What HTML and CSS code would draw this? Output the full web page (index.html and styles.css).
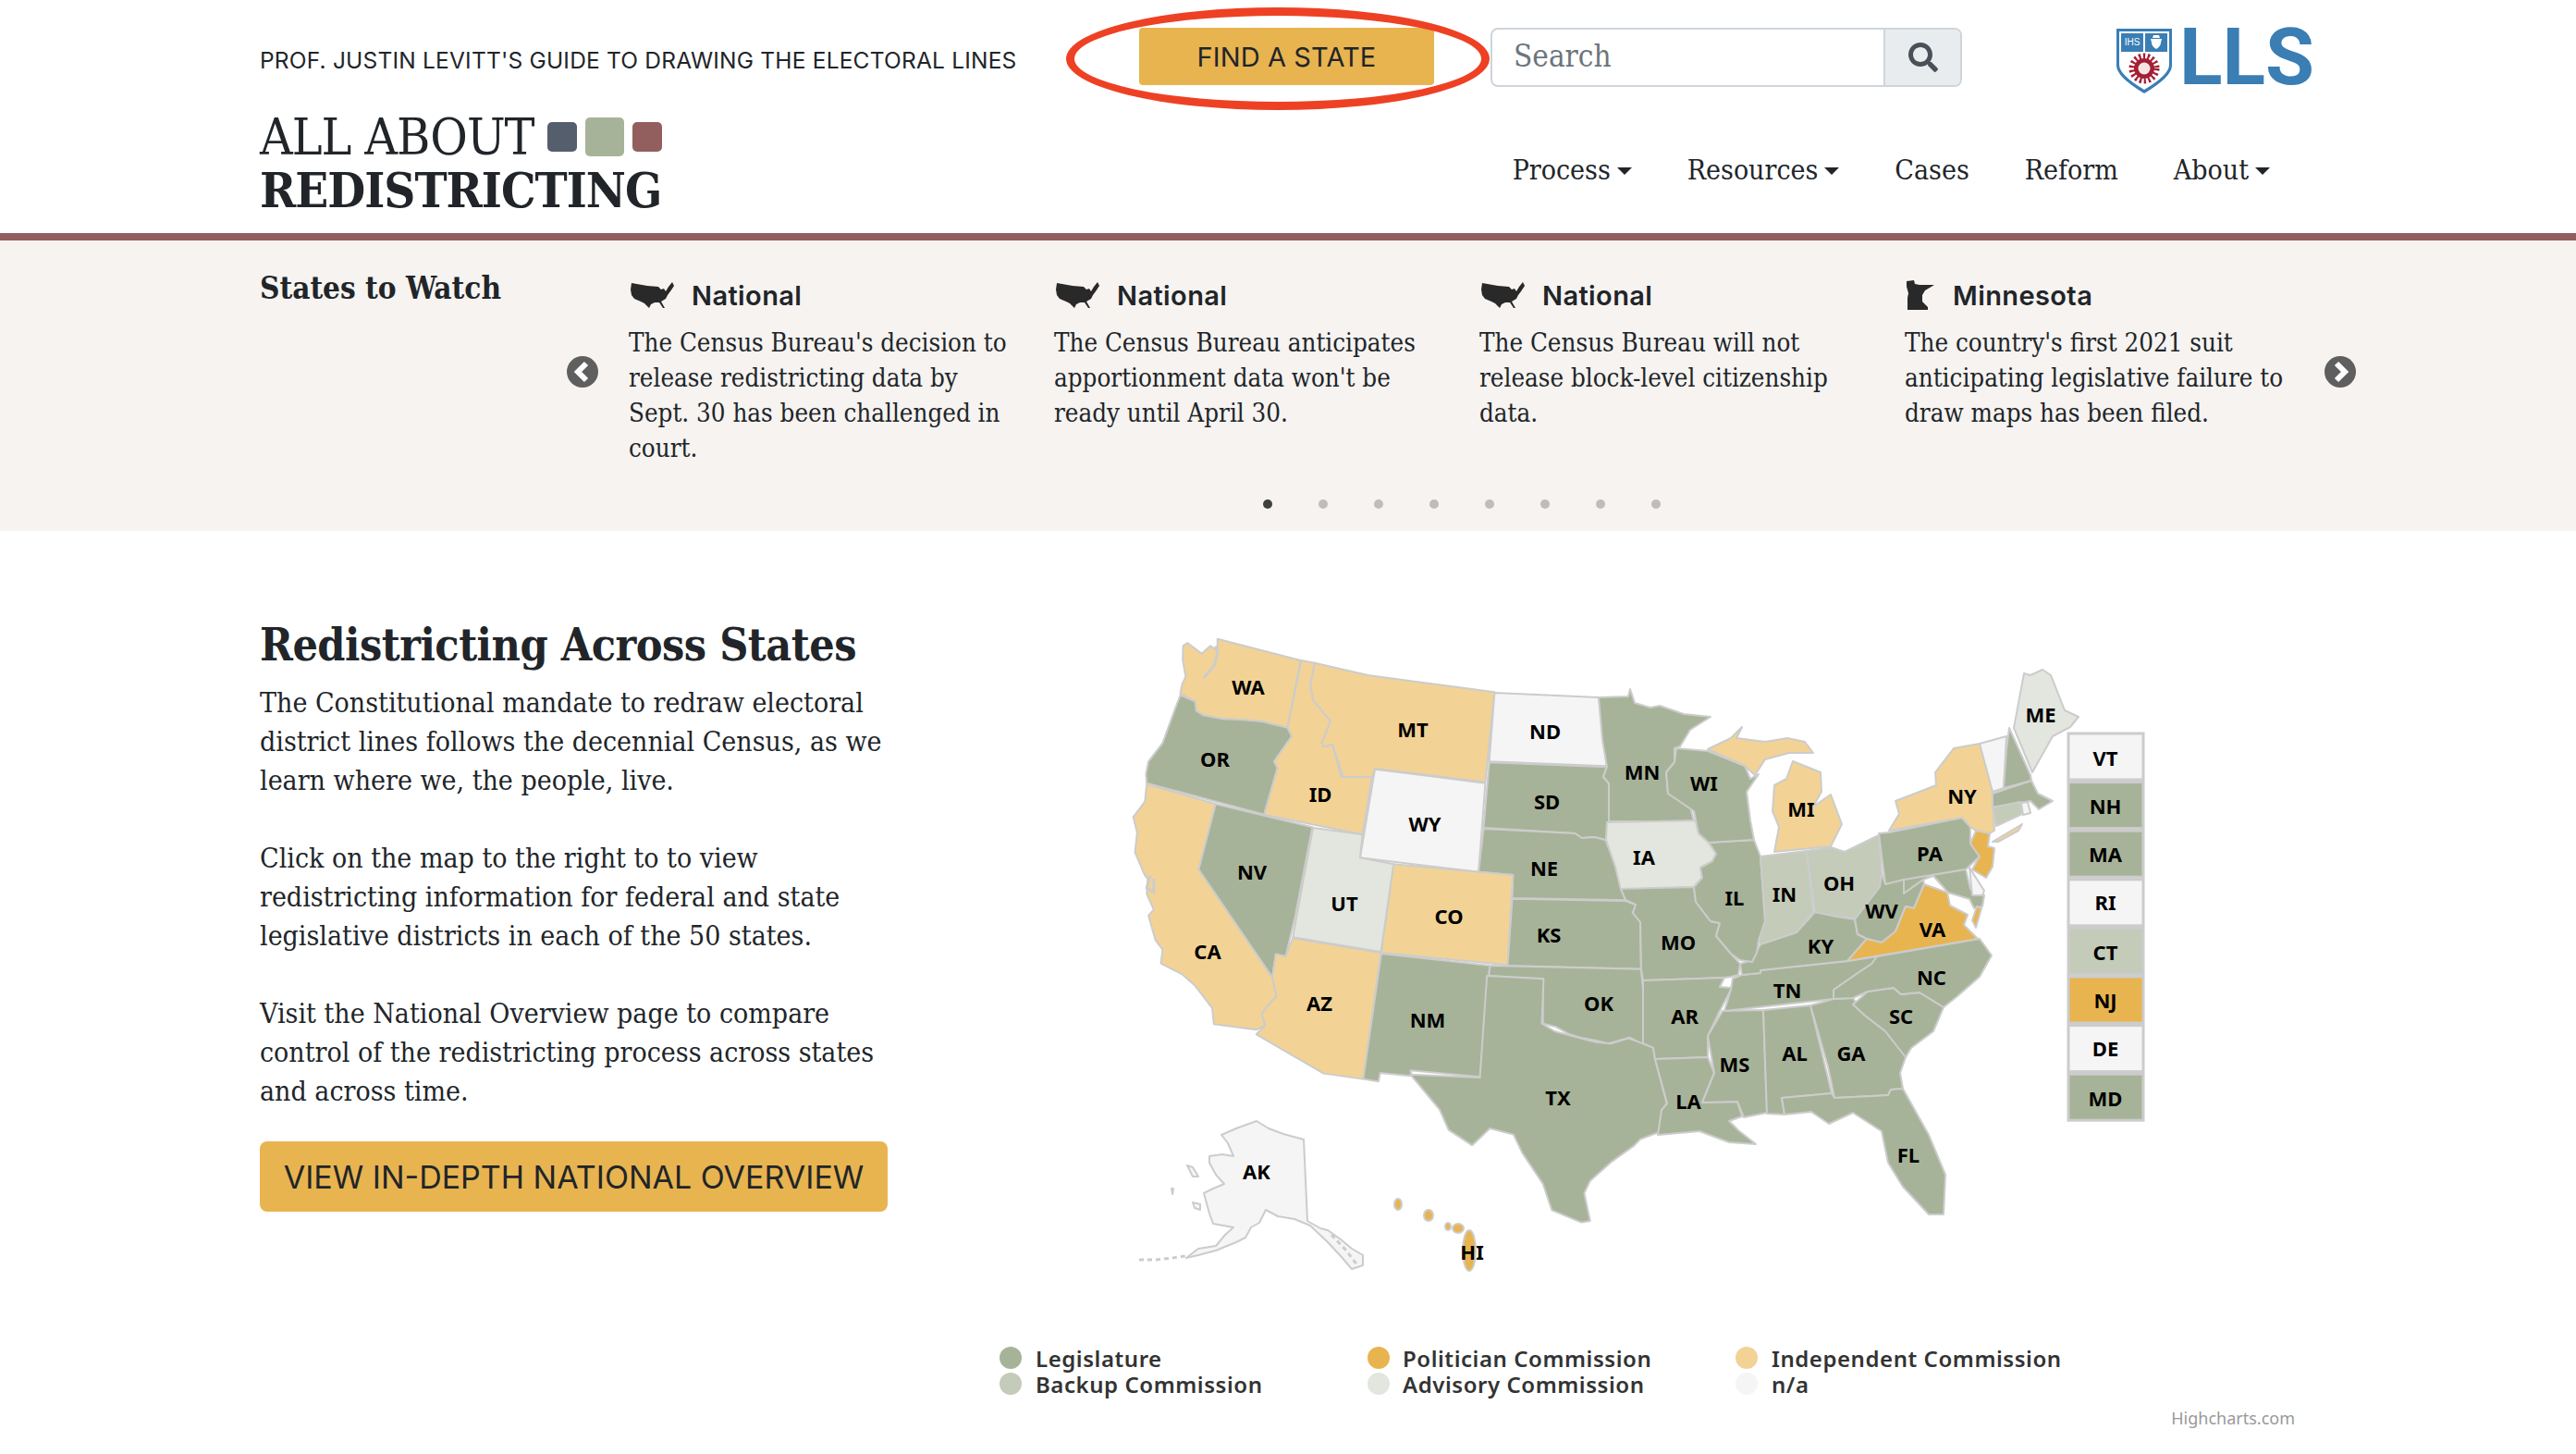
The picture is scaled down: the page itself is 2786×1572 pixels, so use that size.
FILE: index.html
```html
<!DOCTYPE html>
<html lang="en">
<head>
<meta charset="utf-8">
<title>All About Redistricting</title>
<link rel="stylesheet" href="styles.css">
</head>
<body>
<header class="site-header">
  <div class="top-row">
    <p class="tagline">PROF. JUSTIN LEVITT'S GUIDE TO DRAWING THE ELECTORAL LINES</p>
    <div class="find-wrap">
      <a class="find-btn">FIND A STATE</a>
      <span class="red-ring"></span>
    </div>
    <div class="search">
      <span class="search-input">Search</span>
      <span class="search-btn">
        <svg class="search-icon" viewBox="0 0 512 512"><path d="M505 442.7L405.3 343c-4.5-4.5-10.6-7-17-7H372c27.6-35.3 44-79.7 44-128C416 93.1 322.9 0 208 0S0 93.1 0 208s93.1 208 208 208c48.3 0 92.7-16.4 128-44v16.3c0 6.4 2.5 12.5 7 17l99.7 99.7c9.4 9.4 24.6 9.4 33.9 0l28.3-28.3c9.4-9.4 9.4-24.6.1-34zM208 336c-70.7 0-128-57.2-128-128 0-70.7 57.2-128 128-128 70.7 0 128 57.2 128 128 0 70.7-57.2 128-128 128z"/></svg>
      </span>
    </div>
    <div class="lls">
      <svg class="shield" viewBox="0 0 60 70">
        <path class="sh-blue" d="M0 0H60V40Q60 52 30 70Q0 52 0 40Z"/>
        <path class="sh-white" d="M3 3H57V39Q57 50 30 66Q3 50 3 39Z"/>
        <rect class="sh-blue" x="5" y="5" width="24" height="20"/>
        <rect class="sh-blue" x="31" y="5" width="24" height="20"/>
        <text class="sh-ihs" x="17" y="18">IHS</text>
        <path class="sh-heart" d="M37 11H49L48 15Q48 19 43 22Q38 19 38 15ZM40 7H46L47 10H39Z"/>
        <circle class="sh-rays" cx="30" cy="43" r="13"/>
        <circle class="sh-sun" cx="30" cy="43" r="11"/>
        <circle class="sh-face" cx="30" cy="43" r="6.5"/>
      </svg>
      <span class="lls-text">LLS</span>
    </div>
  </div>
  <div class="brand-row">
    <div class="brand">
      <div class="brand-line">
        <span class="brand-about">ALL ABOUT</span>
        <span class="sq sq-slate"></span>
        <span class="sq sq-green"></span>
        <span class="sq sq-maroon"></span>
      </div>
      <div class="brand-main">REDISTRICTING</div>
    </div>
    <nav class="nav">
      <a class="nav-link caret">Process</a>
      <a class="nav-link caret">Resources</a>
      <a class="nav-link">Cases</a>
      <a class="nav-link">Reform</a>
      <a class="nav-link caret">About</a>
    </nav>
  </div>
</header>

<section class="watch">
  <div class="watch-row">
    <h2 class="watch-title">States to Watch</h2>
    <svg class="arrow" viewBox="0 0 34 34"><circle class="arrow-bg" cx="17" cy="17" r="17"/><path class="arrow-ch" d="M21 8L12 17L21 26"/></svg>
    <div class="watch-items">
      <article class="watch-item">
        <h3 class="item-head"><svg class="us-icon" viewBox="0 0 47 28"><path d="M1 1L18 4L30 5L33 8L36 7L38 10L41 5L45 0L47 4L43 10L40 14L38 18L33 21L37 28L35 28L31 22L26 22L22 24L20 28L15 23L11 21L4 18L1 14L0 8Z"/></svg>National</h3>
        <p class="item-text">The Census Bureau's decision to<br>release redistricting data by<br>Sept. 30 has been challenged in<br>court.</p>
      </article>
      <article class="watch-item">
        <h3 class="item-head"><svg class="us-icon" viewBox="0 0 47 28"><path d="M1 1L18 4L30 5L33 8L36 7L38 10L41 5L45 0L47 4L43 10L40 14L38 18L33 21L37 28L35 28L31 22L26 22L22 24L20 28L15 23L11 21L4 18L1 14L0 8Z"/></svg>National</h3>
        <p class="item-text">The Census Bureau anticipates<br>apportionment data won't be<br>ready until April 30.</p>
      </article>
      <article class="watch-item">
        <h3 class="item-head"><svg class="us-icon" viewBox="0 0 47 28"><path d="M1 1L18 4L30 5L33 8L36 7L38 10L41 5L45 0L47 4L43 10L40 14L38 18L33 21L37 28L35 28L31 22L26 22L22 24L20 28L15 23L11 21L4 18L1 14L0 8Z"/></svg>National</h3>
        <p class="item-text">The Census Bureau will not<br>release block-level citizenship<br>data.</p>
      </article>
      <article class="watch-item">
        <h3 class="item-head"><svg class="mn-icon" viewBox="0 0 30 34"><path d="M0 2L8 1L9 5L14 6L30 6L20 12L17 17L17 24L23 30L23 33L1 33L1 20L2 15L0 8Z"/></svg>Minnesota</h3>
        <p class="item-text">The country's first 2021 suit<br>anticipating legislative failure to<br>draw maps has been filed.</p>
      </article>
    </div>
    <svg class="arrow arrow-next" viewBox="0 0 34 34"><circle class="arrow-bg" cx="17" cy="17" r="17"/><path class="arrow-ch" d="M13 8L22 17L13 26"/></svg>
  </div>
  <div class="dots">
    <span class="dot dot-on"></span><span class="dot"></span><span class="dot"></span><span class="dot"></span><span class="dot"></span><span class="dot"></span><span class="dot"></span><span class="dot"></span>
  </div>
</section>

<main class="main">
  <div class="intro">
    <h1 class="intro-title">Redistricting Across States</h1>
    <p class="intro-text">The Constitutional mandate to redraw electoral<br>district lines follows the decennial Census, as we<br>learn where we, the people, live.</p>
    <p class="intro-text">Click on the map to the right to to view<br>redistricting information for federal and state<br>legislative districts in each of the 50 states.</p>
    <p class="intro-text">Visit the National Overview page to compare<br>control of the redistricting process across states<br>and across time.</p>
    <a class="overview-btn">VIEW IN-DEPTH NATIONAL OVERVIEW</a>
  </div>
  <svg class="chart" viewBox="1060 640 1440 932">
    <g transform="translate(1200 670) scale(.3827 .3333)">
      <polygon class="st ind" points="305,62 540,132 503,350 430,330 380,325 320,322 265,310 245,295 242,265 200,240 205,210 215,185 207,130 208,85 220,75 260,110 285,85 305,100"/>
      <polyline class="sound" points="300,85 305,110 295,150 265,190"/>
      <polygon class="st leg" points="200,245 242,265 245,295 265,310 320,322 380,325 430,330 503,350 515,378 465,460 475,480 437,632 105,530 103,500 110,460 150,400 185,290"/>
      <polygon class="st ind" points="105,533 300,598 252,810 460,1160 472,1222 445,1255 430,1280 440,1315 415,1330 295,1312 290,1260 240,1185 205,1150 145,1115 150,1070 130,1040 110,960 125,940 105,890 108,840 100,830 72,755 78,690 67,640 100,590"/>
      <polyline class="sound" points="115,830 105,870 125,885 125,840"/>
      <polygon class="st leg" points="300,598 573,673 525,960 498,1092 470,1085 460,1160 252,810"/>
      <polygon class="st ind" points="542,132 580,140 568,210 575,260 625,330 600,400 605,412 630,405 655,510 742,510 715,697 437,632 475,480 465,460 515,378 503,350"/>
      <polygon class="st ind" points="580,140 730,180 1088,235 1062,527 750,483 742,510 660,510 630,405 605,412 600,400 625,330 575,260 568,210"/>
      <polygon class="st na" points="1088,237 1382,252 1405,475 1073,460"/>
      <polygon class="st na" points="750,485 1062,530 1043,818 708,772"/>
      <polygon class="st leg" points="1073,463 1405,478 1395,510 1412,530 1412,655 1402,715 1370,705 1335,708 1315,693 1057,675"/>
      <polygon class="st leg" points="1057,678 1315,693 1335,708 1370,705 1402,715 1430,800 1445,870 1458,910 1138,903 1140,828 1043,818"/>
      <polygon class="st adv" points="575,675 715,697 708,772 803,793 767,1078 518,1030"/>
      <polygon class="st ind" points="803,793 1140,828 1125,1120 768,1080"/>
      <polygon class="st leg" points="1138,905 1458,912 1488,925 1478,950 1500,980 1502,1133 1125,1122"/>
      <polygon class="st ind" points="518,1033 767,1080 717,1490 605,1472 415,1345 440,1315 430,1280 445,1255 472,1222 460,1160 470,1085 498,1092"/>
      <polygon class="st leg" points="768,1083 1075,1122 1072,1155 1047,1483 850,1462 855,1480 765,1470 760,1498 717,1490"/>
      <polygon class="st leg" points="1075,1122 1502,1133 1512,1250 1517,1380 1510,1380 1470,1355 1440,1365 1410,1375 1375,1365 1330,1355 1300,1345 1260,1320 1225,1310 1225,1165 1072,1155"/>
    </g>
    <g transform="translate(1200 1050) scale(.6378 .3333)">
      <polygon class="st leg" points="640,15 736,25 733,170 755,195 800,218 825,230 850,235 880,218 905,235 922,248 925,285 945,430 935,520 900,545 890,565 850,620 815,680 805,720 815,810 800,815 750,775 735,690 700,590 685,530 645,510 615,565 575,515 560,450 510,335 628,345"/>
    </g>
    <polygon class="st leg" points="1729,754 1761,753 1763,745 1768,760 1785,765 1795,763 1821,772 1850,775 1828,789 1817,807 1811,809 1811,824 1802,835 1804,858 1828,872 1832,888 1740,888 1740,847 1734,840 1738,829 1733,800"/>
    <polygon class="st adv" points="1738,889 1834,887 1837,901 1847,910 1856,923 1852,931 1839,938 1841,949 1832,959 1753,962 1747,937 1737,908"/>
    <polygon class="st leg" points="1753,961 1832,959 1834,975 1850,996 1860,998 1856,1012 1872,1031 1882,1042 1880,1054 1872,1056 1865,1057 1777,1060 1775,1048 1774,997 1766,987 1769,978 1758,973"/>
    <polygon class="st leg" points="1777,1060 1865,1057 1860,1067 1873,1068 1860,1093 1847,1120 1847,1143 1790,1145 1788,1133 1777,1128"/>
    <polygon class="st leg" points="1790,1145 1847,1143 1854,1160 1841,1192 1879,1191 1884,1207 1870,1212 1880,1222 1899,1237 1870,1235 1838,1223 1793,1227 1797,1200 1803,1193"/>
    <polygon class="st leg" points="1863,1093 1907,1092 1911,1203 1886,1208 1879,1191 1841,1192 1854,1160 1847,1120"/>
    <polygon class="st leg" points="1907,1092 1958,1087 1981,1182 1927,1187 1930,1205 1911,1204"/>
    <polygon class="st leg" points="1958,1087 1983,1080 2004,1079 2013,1092 2048,1117 2061,1143 2055,1160 2058,1177 2045,1178 2042,1184 1984,1187 1977,1153"/>
    <polygon class="st leg" points="1927,1187 1981,1182 1984,1187 2042,1184 2045,1178 2058,1177 2086,1227 2104,1270 2102,1313 2086,1313 2058,1283 2042,1257 2035,1223 2004,1203 1978,1215 1959,1202 1930,1205"/>
    <polygon class="st leg" points="2004,1086 2020,1072 2048,1068 2056,1075 2076,1073 2102,1089 2091,1115 2067,1133 2061,1143 2039,1115 2017,1098"/>
    <polygon class="st leg" points="1983,1080 1983,1070 2009,1052 2024,1042 2030,1034 2141,1015 2154,1033 2141,1056 2117,1077 2102,1089 2076,1073 2056,1075 2048,1068 2020,1072 2004,1079"/>
    <polygon class="st leg" points="1884,1054 1904,1052 1904,1049 1998,1039 2030,1034 2024,1042 2009,1052 1983,1070 1983,1080 1865,1093 1872,1070 1874,1058"/>
    <polygon class="st leg" points="1904,1021 1943,1008 1963,986 1987,991 2006,994 2009,1010 2019,1015 1998,1039 1904,1049 1904,1052 1884,1054 1882,1042 1895,1038"/>
    <polygon class="st leg" points="1848,911 1897,908 1904,926 1909,996 1902,1017 1900,1030 1895,1040 1882,1038 1872,1031 1856,1012 1860,998 1850,996 1834,975 1832,959 1841,949 1839,938 1852,931 1856,923"/>
    <polygon class="st leg" points="1813,809 1847,812 1887,828 1893,842 1902,837 1889,856 1893,887 1897,908 1848,911 1837,901 1832,877 1804,858 1802,835 1811,824"/>
    <polygon class="st ind" points="1847,810 1872,798 1884,786 1878,798 1909,802 1933,798 1952,802 1961,814 1935,814 1909,821 1898,838 1887,828"/>
    <polygon class="st ind" points="1939,823 1969,835 1970,856 1961,872 1980,859 1992,891 1980,915 1919,921 1924,894 1917,877 1919,849 1932,842"/>
    <polygon class="st bak" points="1904,926 1954,920 1961,986 1943,1008 1904,1021 1902,1017 1909,996"/>
    <polygon class="st bak" points="1954,920 1980,916 1995,921 2032,903 2035,944 2033,959 2009,993 1987,991 1963,986"/>
    <polygon class="st leg" points="2032,901 2043,900 2122,884 2131,894 2131,912 2141,926 2126,940 2039,956"/>
    <polygon class="st leg" points="2059,951 2126,940 2131,961 2146,968 2144,980 2135,982 2130,972 2107,965 2091,947 2080,951 2059,966"/>
    <polygon class="st leg" points="2039,956 2059,951 2059,966 2080,951 2081,956 2070,982 2061,980 2050,1007 2035,1019 2019,1015 2009,1010 2006,994 2033,959 2035,944"/>
    <polygon class="st pol" points="1998,1039 2019,1015 2035,1019 2050,1007 2061,980 2070,982 2081,956 2106,965 2109,979 2128,989 2124,1000 2139,1015"/>
    <polygon class="st pol" points="2138,980 2143,982 2137,1003 2133,995"/>
    <polygon class="st na" points="2130,938 2146,963 2144,968 2133,968"/>
    <polygon class="st pol" points="2137,898 2152,901 2150,915 2157,917 2155,937 2148,949 2133,940 2141,926 2131,912"/>
    <polygon class="st ind" points="2043,898 2054,880 2050,866 2094,849 2093,835 2113,809 2141,804 2154,838 2157,898 2152,901 2137,898 2131,894 2122,884"/>
    <polygon class="st ind" points="2155,910 2187,891 2183,898 2161,910"/>
    <polygon class="st na" points="2141,804 2170,796 2167,852 2155,856"/>
    <polygon class="st leg" points="2173,787 2196,838 2197,844 2167,852 2170,810"/>
    <polygon class="st adv" points="2178,787 2189,728 2196,730 2209,724 2218,730 2233,768 2248,775 2239,786 2220,796 2198,835"/>
    <polygon class="st leg" points="2155,858 2197,844 2204,858 2220,866 2205,875 2196,866 2155,873"/>
    <polygon class="st bak" points="2155,873 2185,867 2187,880 2159,893"/>
    <polygon class="st na" points="2186,868 2193,867 2196,879 2188,881"/>
    <polygon class="st na" points="1359,1212 1372,1220 1388,1226 1410,1232 1414,1320 1428,1328 1436,1330 1450,1340 1462,1350 1474,1357 1474,1368 1462,1372 1450,1358 1436,1343 1417,1325 1400,1318 1382,1315 1369,1308 1362,1322 1353,1327 1347,1338 1337,1343 1315,1352 1296,1357 1283,1360 1296,1350 1315,1347 1325,1335 1334,1327 1312,1323 1308,1312 1302,1290 1312,1285 1324,1280 1315,1270 1308,1257 1308,1250 1322,1248 1334,1250 1328,1236 1321,1227 1337,1220"/>
    <polyline class="chain" points="1232,1362 1250,1362 1268,1360 1282,1358"/>
    <polyline class="chain" points="1440,1335 1456,1352 1468,1368"/>
    <polygon class="st na" points="1284,1260 1290,1262 1296,1272 1290,1272"/>
    <polygon class="st na" points="1267,1285 1269,1285 1268,1291"/>
    <polygon class="st na" points="1290,1300 1298,1302 1298,1308 1292,1306"/>
    <ellipse class="st pol" cx="1589" cy="1352" rx="7" ry="22"/>
    <ellipse class="st pol" cx="1512" cy="1302" rx="4" ry="6"/>
    <ellipse class="st pol" cx="1545" cy="1314" rx="5" ry="6"/>
    <ellipse class="st pol" cx="1577" cy="1328" rx="6" ry="5"/>
    <ellipse class="st pol" cx="1566" cy="1326" rx="3" ry="4"/>

    <g class="labels">
      <text x="1350" y="742">WA</text><text x="1528" y="788">MT</text><text x="1671" y="790">ND</text>
      <text x="1314" y="820">OR</text><text x="1428" y="858">ID</text><text x="1541" y="890">WY</text>
      <text x="1673" y="866">SD</text><text x="1776" y="834">MN</text><text x="1354" y="942">NV</text>
      <text x="1454" y="976">UT</text><text x="1567" y="990">CO</text><text x="1670" y="938">NE</text>
      <text x="1675" y="1010">KS</text><text x="1778" y="926">IA</text><text x="1306" y="1028">CA</text>
      <text x="1427" y="1084">AZ</text><text x="1544" y="1102">NM</text><text x="1729" y="1084">OK</text>
      <text x="1843" y="846">WI</text><text x="2207" y="772">ME</text><text x="1948" y="874">MI</text>
      <text x="2122" y="860">NY</text><text x="2087" y="922">PA</text><text x="1989" y="954">OH</text>
      <text x="1930" y="966">IN</text><text x="1876" y="970">IL</text><text x="2035" y="984">WV</text>
      <text x="2090" y="1004">VA</text><text x="1969" y="1022">KY</text><text x="1815" y="1018">MO</text>
      <text x="2089" y="1056">NC</text><text x="1933" y="1070">TN</text><text x="1822" y="1098">AR</text>
      <text x="2056" y="1098">SC</text><text x="1941" y="1138">AL</text><text x="2002" y="1138">GA</text>
      <text x="1876" y="1150">MS</text><text x="1826" y="1190">LA</text><text x="2064" y="1248">FL</text>
      <text x="1685" y="1186">TX</text><text x="1359" y="1266">AK</text><text x="1592" y="1353">HI</text>
    </g>

    <g>
      <rect class="box na" x="2237" y="793" width="81" height="50"/><rect class="box leg" x="2237" y="845.6" width="81" height="50"/>
      <rect class="box leg" x="2237" y="898.2" width="81" height="50"/><rect class="box na" x="2237" y="950.8" width="81" height="50"/>
      <rect class="box bak" x="2237" y="1003.4" width="81" height="50"/><rect class="box pol" x="2237" y="1056" width="81" height="50"/>
      <rect class="box na" x="2237" y="1108.6" width="81" height="50"/><rect class="box leg" x="2237" y="1161.2" width="81" height="50"/>
    </g>
    <g class="labels">
      <text x="2277" y="819">VT</text><text x="2277" y="871">NH</text><text x="2277" y="923">MA</text><text x="2277" y="975">RI</text>
      <text x="2277" y="1029">CT</text><text x="2277" y="1081">NJ</text><text x="2277" y="1133">DE</text><text x="2277" y="1187">MD</text>
    </g>

    <g class="legend">
      <circle class="leg" cx="1093" cy="1468" r="12"/><text x="1120" y="1478">Legislature</text>
      <circle class="bak" cx="1093" cy="1496" r="12"/><text x="1120" y="1506">Backup Commission</text>
      <circle class="pol" cx="1491" cy="1468" r="12"/><text x="1517" y="1478">Politician Commission</text>
      <circle class="adv" cx="1491" cy="1496" r="12"/><text x="1517" y="1506">Advisory Commission</text>
      <circle class="ind" cx="1889" cy="1468" r="12"/><text x="1916" y="1478">Independent Commission</text>
      <circle class="na" cx="1889" cy="1496" r="12"/><text x="1916" y="1506">n/a</text>
    </g>
    <text class="credits" x="2482" y="1540">Highcharts.com</text>
  </svg>
</main>
</body>
</html>
```
FILE: styles.css
```css
html, body {
  margin: 0;
  padding: 0;
  background: #fff;
  color: #212529;
  font-family: "DejaVu Serif", "Liberation Serif", serif;
  overflow: hidden;
}
p, h1, h2, h3 { margin: 0; }

.site-header {
  height: 252px;
  padding: 0 281px;
  border-bottom: 8px solid #925e5e;
  box-sizing: content-box;
}
.top-row {
  display: flex;
  align-items: center;
  padding-top: 30px;
  height: 64px;
}
.tagline {
  width: 951px;
  font-family: Inter, "Liberation Sans", sans-serif;
  font-size: 24.5px;
  letter-spacing: 0.2px;
  white-space: nowrap;
  margin-top: 6px;
}
.find-wrap { position: relative; }
.find-btn {
  display: flex;
  align-items: center;
  justify-content: center;
  width: 319px;
  height: 62px;
  margin-top: -2px;
  background: #e8b44f;
  border-radius: 4px;
  font-family: Inter, "Liberation Sans", sans-serif;
  font-size: 29px;
  letter-spacing: 0.1px;
}
.red-ring {
  position: absolute;
  left: -79px;
  top: -24px;
  width: 440px;
  height: 93px;
  border: 9px solid #ee4124;
  border-radius: 50%;
}
.search {
  display: flex;
  width: 510px;
  height: 64px;
  margin-left: 61px;
  box-sizing: border-box;
  border: 2px solid #ced4da;
  border-radius: 8px;
  overflow: hidden;
}
.search-input {
  flex: 1;
  padding-left: 23px;
  font-size: 33px;
  line-height: 58px;
  color: #6c757d;
  font-stretch: condensed;
}
.search-btn {
  display: flex;
  align-items: center;
  justify-content: center;
  width: 81px;
  background: #e9ecef;
  border-left: 2px solid #ced4da;
}
.search-icon { width: 32px; height: 32px; fill: #495057; }

.lls {
  display: flex;
  align-items: flex-start;
  align-self: flex-start;
  margin-left: 167px;
  margin-top: 1px;
  height: 70px;
}
.shield { width: 60px; height: 70px; display: block; }
.sh-blue { fill: #3a7eb4; }
.sh-white { fill: #fff; }
.sh-ihs { fill: #fff; font-family: "Liberation Sans", sans-serif; font-size: 10px; text-anchor: middle; }
.sh-heart { fill: #fff; }
.sh-rays { fill: none; stroke: #a41e34; stroke-width: 7; stroke-dasharray: 2.2 2.4; }
.sh-sun { fill: #a41e34; }
.sh-face { fill: #f5e6e4; }
.lls-text {
  margin-left: 8px;
  font-family: Roboto, "Liberation Sans", sans-serif;
  font-weight: 700;
  font-size: 86px;
  line-height: 62px;
  color: #3a7eb4;
}

.brand-row {
  display: flex;
  justify-content: space-between;
  margin-top: 32px;
}
.brand { width: 440px; }
.brand-line { display: flex; align-items: center; height: 44px; }
.brand-about {
  font-size: 55px;
  line-height: 44px;
  font-stretch: condensed;
  letter-spacing: -1px;
  white-space: nowrap;
}
.sq { display: block; margin-left: 9px; border-radius: 5px; width: 32px; height: 32px; }
.sq-slate { background: #555e6c; margin-left: 14px; }
.sq-green { background: #a7b398; width: 42px; height: 42px; }
.sq-maroon { background: #925e5e; }
.brand-main {
  margin-top: 14px;
  font-size: 52.5px;
  line-height: 44px;
  font-weight: 700;
  font-stretch: condensed;
  letter-spacing: -1px;
  white-space: nowrap;
}
.nav {
  display: flex;
  gap: 60px;
  margin-right: 50px;
  margin-top: 36px;
  height: 44px;
}
.nav-link {
  font-size: 30px;
  line-height: 44px;
  font-stretch: condensed;
  white-space: nowrap;
}
.caret::after {
  content: "";
  display: inline-block;
  margin-left: 7px;
  vertical-align: 5px;
  border-top: 8px solid #212529;
  border-left: 8px solid transparent;
  border-right: 8px solid transparent;
}

.watch {
  height: 314px;
  background: #f6f3f0;
  padding: 0 238px 0 281px;
  box-sizing: border-box;
}
.watch-row { display: flex; align-items: flex-start; height: 276px; padding-top: 30px; box-sizing: border-box; }
.watch-title {
  width: 333px;
  font-size: 33px;
  line-height: 44px;
  font-weight: 700;
  font-stretch: condensed;
  white-space: nowrap;
}
.arrow { width: 34px; height: 34px; margin-top: 95px; flex: none; }
.arrow-next { margin-left: 26px; }
.arrow-bg { fill: #5f5f5f; }
.arrow-ch { fill: none; stroke: #fff; stroke-width: 6; }
.watch-items {
  display: grid;
  grid-template-columns: repeat(4, 428px);
  column-gap: 32px;
  margin-left: 33px;
}
.item-head {
  display: flex;
  align-items: center;
  height: 58px;
  font-family: Inter, "Liberation Sans", sans-serif;
  font-weight: 600;
  font-size: 29px;
  letter-spacing: 0.4px;
}
.us-icon { width: 47px; height: 28px; margin-right: 19px; margin-left: 2px; fill: #292929; }
.mn-icon { width: 30px; height: 34px; margin-right: 20px; margin-left: 2px; fill: #292929; }
.item-text {
  margin-top: 3px;
  font-size: 27.5px;
  line-height: 38px;
  font-stretch: condensed;
  white-space: nowrap;
}
.dots { display: flex; gap: 50px; margin-left: 1085px; padding-top: 4px; }
.dot { width: 10px; height: 10px; border-radius: 50%; background: #bdbdbd; }
.dot-on { background: #3f3f3f; }

.main {
  display: flex;
  height: 998px;
  padding: 66px 286px 0 281px;
  box-sizing: border-box;
}
.intro { width: 779px; flex: none; padding-top: 27px; }
.intro-title {
  font-size: 48px;
  line-height: 60px;
  font-weight: 700;
  font-stretch: condensed;
  letter-spacing: -0.5px;
  white-space: nowrap;
}
.intro-text {
  margin-top: 0;
  margin-bottom: 42px;
  font-size: 30px;
  line-height: 42px;
  font-stretch: condensed;
  white-space: nowrap;
}
.intro-title + .intro-text { margin-top: 12px; }
.overview-btn {
  display: flex;
  align-items: center;
  justify-content: center;
  width: 679px;
  height: 76px;
  margin-top: -9px;
  background: #e8b44f;
  border-radius: 8px;
  font-family: Inter, "Liberation Sans", sans-serif;
  font-size: 34px;
  white-space: nowrap;
}

.chart { width: 1440px; height: 932px; display: block; flex: none; }
.st { stroke: #ccc; stroke-width: 2px; vector-effect: non-scaling-stroke; stroke-linejoin: round; }
.box { stroke: #ccc; stroke-width: 3px; }
.sound { fill: none; stroke: #ccc; stroke-width: 3px; vector-effect: non-scaling-stroke; }
.chain { fill: none; stroke: #ccc; stroke-width: 3px; stroke-dasharray: 5 4; }
.leg { fill: #a7b398; }
.pol { fill: #e8b44f; }
.ind { fill: #f2d395; }
.bak { fill: #c4cbb9; }
.adv { fill: #e3e6de; }
.na { fill: #f5f5f5; }
.labels text {
  font-family: "Noto Sans", "Open Sans", sans-serif;
  font-weight: 700;
  font-size: 22px;
  fill: #000;
  text-anchor: middle;
  dominant-baseline: central;
}
.legend text {
  font-family: "Noto Sans", "Open Sans", sans-serif;
  font-weight: 600;
  font-size: 24px;
  letter-spacing: 0.55px;
  fill: #333;
}
.credits {
  font-family: "Noto Sans", "Open Sans", sans-serif;
  font-size: 18px;
  fill: #999;
  text-anchor: end;
}
```
